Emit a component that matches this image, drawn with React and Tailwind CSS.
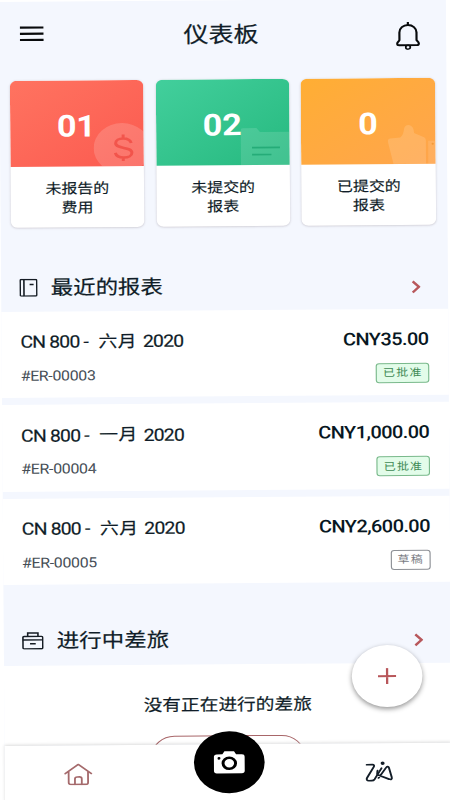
import React from 'react';

const STATS = [
  { count: '01', lines: ['未报告的', '费用'], bg: 'bg-linear-to-br from-[#ff7360] to-[#fb5a50]', art: 'coin' },
  { count: '02', lines: ['未提交的', '报表'], bg: 'bg-linear-to-br from-[#42cf9c] to-[#25b97f]', art: 'folder' },
  { count: '0', lines: ['已提交的', '报表'], bg: 'bg-linear-to-br from-[#ffae33] to-[#ffa54c]', art: 'thumb' },
];

const REPORTS = [
  { id: '#ER-00003', month: '六月', amount: 'CNY35.00', status: 'approved' },
  { id: '#ER-00004', month: '一月', amount: 'CNY1,000.00', status: 'approved' },
  { id: '#ER-00005', month: '六月', amount: 'CNY2,600.00', status: 'draft' },
];

const CardArt = ({ type }) => {
  if (type === 'coin') {
    return (
      <svg className="absolute right-0 bottom-0" width="44" height="44" viewBox="0 0 44 44" fill="none">
        <circle cx="25" cy="26" r="25" fill="#fff" fillOpacity=".16" />
        <path d="M33 21c-.7-3-3.300-4.600-7-4.600-3.800 0-6.600 1.700-6.600 4.600 0 6.500 14.200 3.200 14.200 9.700 0 3-3 4.800-7 4.800s-6.900-1.800-7.600-4.700M26 12.500v3.500M26 35.500v3.500" stroke="#ee463f" strokeOpacity=".72" strokeWidth="2.600" />
      </svg>
    );
  }
  if (type === 'folder') {
    return (
      <svg className="absolute right-0 bottom-0" width="43" height="38" viewBox="0 0 43 38" fill="none">
        <path d="M0 38V3a2 2 0 0 1 2-2h12l3 4h26v33z" fill="#fff" fillOpacity=".13" />
        <path d="M10 20.500h24.500M10 27.500h17" stroke="#25ac78" strokeWidth="1.600" />
      </svg>
    );
  }
  return (
    <svg className="absolute right-0 bottom-0" width="42" height="40" viewBox="0 0 42 40" fill="none">
      <path d="M5 40L0 17q0-2 2-2.500l9-1c2.500-2 3-5 3.500-9C15 2 16.500.8 18.500 1c3 .5 4.500 3 4.700 8l8.800 4.500q1.500 1 1.500 3V40z" fill="#fff" fillOpacity=".14" />
      <path d="M35.500 17H42v23h-6.500z" fill="#fff" fillOpacity=".11" />
      <circle cx="39.500" cy="20" r="1" fill="#f39a38" />
    </svg>
  );
};

const StatCard = ({ stat }) => (
  <div className="h-[147px] flex-1 overflow-hidden rounded-md bg-white shadow-[0_0.5px_2px_rgba(60,40,50,0.25)]">
    <div className={`relative flex h-[86px] items-center justify-center pt-[5px] pr-px ${stat.bg}`}>
      <CardArt type={stat.art} />
      <span className="relative text-[30px] leading-none font-bold tracking-[-0.3px] text-white">{stat.count}</span>
    </div>
    <div className="pt-[12.500px] text-center text-[14px] leading-[19.5px] [-webkit-text-stroke:0.15px_#101d28]">
      {stat.lines.map((line) => (
        <div key={line}>{line}</div>
      ))}
    </div>
  </div>
);

const Chevron = () => (
  <svg width="8" height="14" viewBox="0 0 8 14" fill="none">
    <path d="M1 1.500l5.500 5.500L1 12.500" stroke="#b8585c" strokeWidth="2.200" />
  </svg>
);

const BookIcon = () => (
  <svg width="16" height="18" viewBox="0 0 16 18" fill="none" stroke="#151c24" strokeWidth="1.400">
    <rect x=".7" y=".7" width="14.600" height="16.600" rx="1" />
    <path d="M4 .7v16.600M9 5.700h3.500" />
  </svg>
);

const CaseIcon = () => (
  <svg width="19" height="18" viewBox="0 0 19 18" fill="none" stroke="#151c24" strokeWidth="1.400">
    <rect x=".8" y="4.700" width="17.400" height="12.300" rx="1" />
    <path d="M5 4.500V1.200h9v3.300M.8 8.200h17.400M7 12h5" />
  </svg>
);

const Badge = ({ status }) =>
  status === 'approved' ? (
    <span className="flex h-5 w-[46.5px] items-center justify-center rounded-[3px] border border-[#79b98b] bg-[#e2fce9] pt-px pl-px text-[10.5px] tracking-[1.1px] text-[#3f8a55]">
      已批准
    </span>
  ) : (
    <span className="flex h-5 w-[35px] items-center justify-center rounded-[3px] border border-[#8d9096] bg-white pt-px pl-px text-[10.5px] tracking-[1.1px] text-[#777a82]">
      草稿
    </span>
  );

const ReportRow = ({ report }) => (
  <div className="flex h-[86.5px] justify-between bg-white pr-[17.5px] pl-[16.500px]">
    <div className="flex flex-col pt-[21.500px]">
      <div className="flex h-5 items-center text-[17px] whitespace-pre [-webkit-text-stroke:0.2px_#101d28]">
        <span className="w-[68.500px] tracking-[-0.7px]">CN 800 -</span>
        <span className="w-[39px] text-[16.5px] tracking-[0.5px]">{report.month}</span>
        <span className="tracking-[-0.7px]">2020</span>
      </div>
      <span className="mt-[12.500px] h-5 text-[14px] leading-5 tracking-[-0.3px] text-[#474f57]">{report.id}</span>
    </div>
    <div className="flex flex-col items-end pt-5">
      <span className="h-5 text-[17.5px] leading-5 font-medium tracking-[-0.5px] text-[#081722]">{report.amount}</span>
      <div className="mt-[14px]">
        <Badge status={report.status} />
      </div>
    </div>
  </div>
);

const SectionHeader = ({ icon, title, className }) => (
  <div className={`flex items-center justify-between pr-[24.500px] pl-[15.500px] ${className}`}>
    <div className="flex items-center">
      {icon}
      <h2 className="ml-[12px] pt-px text-[19.7px] leading-6 [-webkit-text-stroke:0.2px_#101d28]">{title}</h2>
    </div>
    <div className="pt-[3px]">
      <Chevron />
    </div>
  </div>
);

const App = () => (
  <div className="h-screen w-full overflow-hidden bg-white">
    {/* the handset frame sits slightly tilted and widened */}
    <div className="relative flex h-[812px] w-[392px] origin-top-left [transform:translate(-1px,2px)_rotate(-0.43deg)_scaleX(1.14)] flex-col bg-[#f4f7fe] font-[Roboto,'Noto_Sans_CJK_SC',sans-serif] text-[#101d28]">
      <header className="flex h-[79px] items-start justify-between pr-[22.500px] pl-[17.500px]">
        <svg className="mt-[23.500px]" width="21" height="16" viewBox="0 0 21 16" fill="none">
          <path d="M0 1.800h21M0 8h21M0 14.200h21" stroke="#080a0c" strokeWidth="2.100" />
        </svg>
        <h1 className="mt-[21px] ml-[2px] text-[22px] leading-7 [-webkit-text-stroke:0.2px_#101d28]">仪表板</h1>
        <svg className="mt-[22.500px]" width="21" height="28" viewBox="0 0 21 28" fill="none" stroke="#080a0c" strokeWidth="1.900">
          <path d="M10.500 0v3M3 18V10.500a7.500 7.500 0 0 1 15 0V18c0 1 2 2 2 3.700 0 1-.6 1.600-1.800 1.600H2.800C1.600 23.300 1 22.700 1 21.700 1 20 3 19 3 18z" strokeLinejoin="round" />
          <circle cx="10.500" cy="25.200" r="2" strokeWidth="1.500" />
        </svg>
      </header>

      <div className="flex gap-[10.3px] pr-[10px] pl-[8.700px]">
        {STATS.map((stat) => (
          <StatCard key={stat.art} stat={stat} />
        ))}
      </div>

      <SectionHeader icon={<BookIcon />} title="最近的报表" className="mt-[36.500px] h-[47px]" />
      <div className="flex flex-col gap-[7px]">
        {REPORTS.map((report) => (
          <ReportRow key={report.id} report={report} />
        ))}
      </div>

      <SectionHeader icon={<CaseIcon />} title="进行中差旅" className="h-[80.500px] pt-[32px]" />
      <div className="flex h-[80px] flex-col items-center overflow-hidden bg-white pt-[29px]">
        <p className="text-[16.400px] leading-6 [-webkit-text-stroke:0.2px_#101d28]">没有正在进行的差旅</p>
        <div className="mt-[18.500px] h-10 w-[134px] shrink-0 rounded-[20px] border border-[#a86669]" />
      </div>

      <nav className="flex flex-1 items-start justify-between bg-white pr-[51.500px] pl-[52px] shadow-[0_-1px_3px_rgba(0,0,0,0.14)]">
        <svg className="mt-[18.500px]" width="25" height="22" viewBox="0 0 25 22" fill="none" stroke="#a56a6c" strokeWidth="1.600" strokeLinecap="round" strokeLinejoin="round">
          <path d="M1 10.200L12.500 1 24 10.200M4 8.300V19a2 2 0 0 0 2 2h13a2 2 0 0 0 2-2V8.300" />
          <path d="M9.500 21v-5.500a2 2 0 0 1 2-2h2a2 2 0 0 1 2 2V21" />
        </svg>
        <svg className="mt-[18.500px]" width="25" height="21" viewBox="0 0 25 21" fill="none" stroke="#131d28" strokeWidth="1.700" strokeLinecap="round" strokeLinejoin="round">
          <path d="M1.500 3.500H6.500c1.500 0 1.900 1 1.200 2.200L1.800 16.500c-.9 1.700-.2 3 1.500 3h2.500c1.200 0 2-.5 2.600-1.500L14.500 7" />
          <path d="M11 9.500l-.4 2.300c-.2 1 .1 1.500.9 2l9.500 4.200c1.700.8 2.900.1 2.400-1.800L21 6.700c-.4-1.500-1.500-1.600-2.500-.2L11.800 16.800" />
          <circle cx="15.500" cy="2.200" r=".9" fill="#131d28" />
        </svg>
      </nav>

      <button className="absolute top-[730.500px] left-[165.500px] flex h-[62px] w-[62px] items-center justify-center rounded-full bg-black">
        <svg width="28" height="24" viewBox="0 0 28 24">
          <path d="M3 4h5l1.800-3h8.400L20 4h5a2.500 2.500 0 0 1 2.500 2.500v14A2.500 2.500 0 0 1 25 23H3A2.500 2.500 0 0 1 .5 20.500v-14A2.500 2.500 0 0 1 3 4z" fill="#fff" />
          <circle cx="14" cy="13" r="5.500" fill="#fff" stroke="#000" strokeWidth="2.600" />
          <circle cx="5" cy="8" r="1.300" fill="#000" />
        </svg>
      </button>

      <button className="absolute top-[646px] left-[304.500px] flex h-[62px] w-[62px] items-center justify-center rounded-full bg-white shadow-[0_2px_5px_rgba(0,0,0,0.42)]">
        <svg width="16" height="16" viewBox="0 0 16 16" fill="none">
          <path d="M8 0v16M0 8h16" stroke="#b8565a" strokeWidth="2" />
        </svg>
      </button>
    </div>
  </div>
);

export default App;
